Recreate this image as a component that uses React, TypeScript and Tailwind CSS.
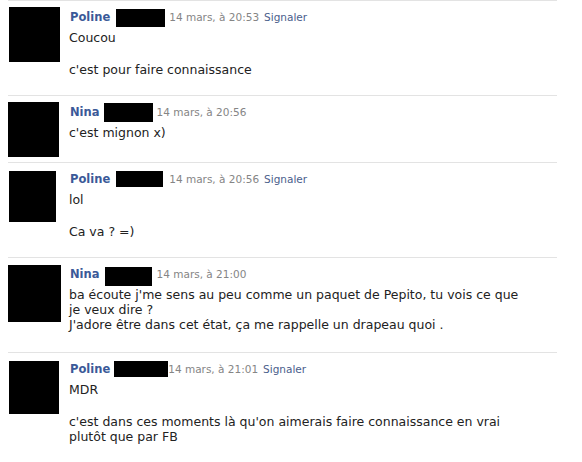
type Post = {
  name: string;
  date: string;
  report: boolean;
  avatar: { ml: string; mt: string; w: string; h: string };
  mask: { ml: string; mt: string; w: string; h: string };
  dateMl: string;
  paragraphs: string[][];
  bodyPb: string;
};

const posts: Post[] = [
  {
    name: 'Poline',
    date: '14 mars, à 20:53',
    report: true,
    avatar: { ml: 'ml-[1px]', mt: 'mt-0', w: 'w-[51px]', h: 'h-[55px]' },
    mask: { ml: 'ml-[6px]', mt: 'mt-[2px]', w: 'w-[49px]', h: 'h-[18px]' },
    dateMl: 'ml-[4px]',
    paragraphs: [['Coucou'], ["c'est pour faire connaissance"]],
    bodyPb: 'pb-[13px]',
  },
  {
    name: 'Nina',
    date: '14 mars, à 20:56',
    report: false,
    avatar: { ml: 'ml-0', mt: 'mt-0', w: 'w-[51px]', h: 'h-[55px]' },
    mask: { ml: 'ml-[4px]', mt: 'mt-[1px]', w: 'w-[49px]', h: 'h-[19px]' },
    dateMl: 'ml-[4px]',
    paragraphs: [["c'est mignon x)"]],
    bodyPb: 'pb-[13px]',
  },
  {
    name: 'Poline',
    date: '14 mars, à 20:56',
    report: true,
    avatar: { ml: 'ml-[1px]', mt: 'mt-[2px]', w: 'w-[47px]', h: 'h-[51px]' },
    mask: { ml: 'ml-[6px]', mt: 'mt-[2px]', w: 'w-[47px]', h: 'h-[16px]' },
    dateMl: 'ml-[6px]',
    paragraphs: [['lol'], ['Ca va ? =)']],
    bodyPb: 'pb-[13px]',
  },
  {
    name: 'Nina',
    date: '14 mars, à 21:00',
    report: false,
    avatar: { ml: 'ml-0', mt: 'mt-[1px]', w: 'w-[53px]', h: 'h-[57px]' },
    mask: { ml: 'ml-[5px]', mt: 'mt-[3px]', w: 'w-[47px]', h: 'h-[19px]' },
    dateMl: 'ml-[5px]',
    paragraphs: [
      [
        "ba écoute j'me sens au peu comme un paquet de Pepito, tu vois ce que je veux dire ?",
        "J'adore être dans cet état, ça me rappelle un drapeau quoi .",
      ],
    ],
    bodyPb: 'pb-[15px]',
  },
  {
    name: 'Poline',
    date: '14 mars, à 21:01',
    report: true,
    avatar: { ml: 'ml-[1px]', mt: 'mt-[2px]', w: 'w-[50px]', h: 'h-[53px]' },
    mask: { ml: 'ml-[4px]', mt: 'mt-[2px]', w: 'w-[54px]', h: 'h-[16px]' },
    dateMl: 'ml-0',
    paragraphs: [
      ['MDR'],
      ["c'est dans ces moments là qu'on aimerais faire connaissance en vrai plutôt que par FB"],
    ],
    bodyPb: 'pb-[13px]',
  },
];

function WallPost({ post }: { post: Post }) {
  return (
    <div className="flex border-t border-[#e3e3e3] pt-[6px] pb-[5px]">
      <div className="w-[61px] shrink-0">
        <div className={`${post.avatar.ml} ${post.avatar.mt} ${post.avatar.w} ${post.avatar.h} bg-black`} />
      </div>
      <div className={`flex-1 pr-[30px] ${post.bodyPb}`}>
        <div className="flex items-start h-[20px] leading-[20px]">
          <span className="ml-[1px] font-bold text-[#3b5998] text-[11.5px]">{post.name}</span>
          <span className={`${post.mask.ml} ${post.mask.mt} ${post.mask.w} ${post.mask.h} bg-black shrink-0`} />
          <span className={`${post.dateMl} text-[#858585] text-[10.5px]`}>{post.date}</span>
          {post.report && <span className="ml-[5px] text-[#4a5e8c] text-[10.5px]">Signaler</span>}
        </div>
        <div className="mt-[3px] text-[12.5px] leading-[15px] text-[#222]">
          {post.paragraphs.map((para, i) => (
            <div key={i} className={i > 0 ? 'mt-[17px]' : ''}>
              {para.map((line, j) => (
                <div key={j}>{line}</div>
              ))}
            </div>
          ))}
        </div>
      </div>
    </div>
  );
}

export default function App() {
  return (
    <div
      className="w-[582px] h-[462px] overflow-hidden bg-white"
      style={{ fontFamily: '"DejaVu Sans", "Lucida Grande", sans-serif' }}
    >
      <div className="ml-[8px] w-[549px]">
        {posts.map((post, i) => (
          <WallPost key={i} post={post} />
        ))}
      </div>
    </div>
  );
}
